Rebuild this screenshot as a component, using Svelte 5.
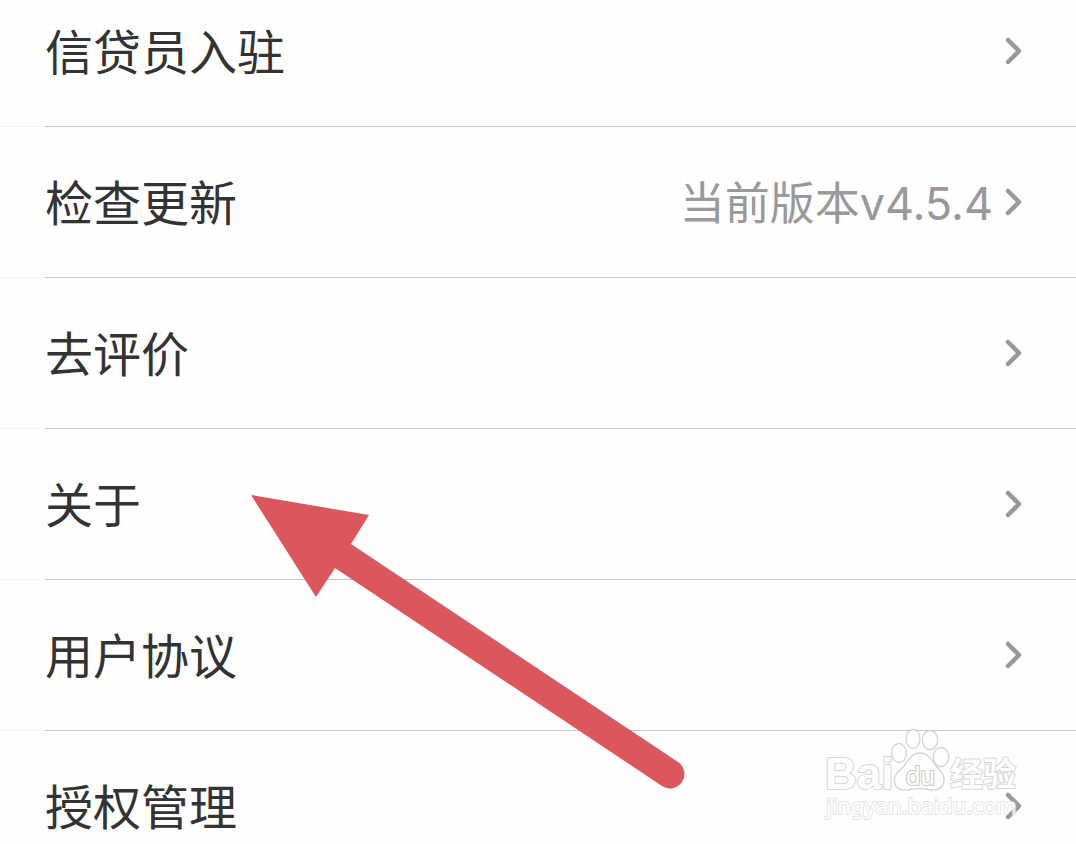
<!-- App.svelte - Settings list with pointer annotation -->
<script lang="ts">
  interface SettingItem {
    label: string;
    value?: string;
  }

  const items: SettingItem[] = [
    { label: '信贷员入驻' },
    { label: '检查更新', value: '当前版本v4.5.4' },
    { label: '去评价' },
    { label: '关于' },
    { label: '用户协议' },
    { label: '授权管理' },
  ];
</script>

<main class="screen">
  <ul class="list">
    {#each items as item}
      <li class="item">
        <button type="button" class="row">
          <span class="label">{item.label}</span>
          {#if item.value}
            <span class="value">{item.value}</span>
          {/if}
          <svg class="chevron" width="18" height="28" viewBox="0 0 18 28" aria-hidden="true">
            <path d="M3 3 L14 14 L3 25" />
          </svg>
        </button>
      </li>
    {/each}
  </ul>

  <!-- Pointer to the "about" row -->
  <svg class="arrow" width="436" height="296" viewBox="0 0 436 296" aria-hidden="true">
    <path d="M1 1 L119 21 L101 50 L428 268 A14 14 0 0 1 412 292 L85 74 L66 103 Z" />
  </svg>

  <!-- Watermark -->
  <svg class="watermark" width="200" height="96" viewBox="0 0 200 96" role="img" aria-label="Baidu 经验">
    <g class="mark">
      <ellipse cx="77" cy="27" rx="7.5" ry="9.5" />
      <ellipse cx="91" cy="13" rx="7" ry="9.5" />
      <ellipse cx="108" cy="14" rx="7.7" ry="9.5" />
      <ellipse cx="119" cy="31" rx="7.7" ry="9.5" />
      <path d="M98 27 C90 27 87 33 83 39 C78 45 72.500 47 72.500 54 C72.500 62 78 65 86 64 C94 62 101 62 108 64 C117 65 122 61 122 53 C122 47 117 44 113 39 C109 33 106 27 98 27 Z" />
    </g>
    <text class="brand" x="3" y="63">Bai</text>
    <text class="du" x="84" y="59">du</text>
    <text class="brand-cn" x="128" y="60">经验</text>
    <text class="site" x="4" y="88">jingyan.baidu.com</text>
  </svg>
</main>

<style>
  :global(body) { margin: 0; background: #fefefe; }

  .screen {
    position: relative; height: 100vh; overflow: hidden; background: #fefefe;
    font-family: Inter, "Noto Sans CJK SC", sans-serif;
  }

  /* The list is scrolled a little, so the first row is cut off at the top */
  .list { list-style: none; margin: -24px 0 0; padding: 0; }

  .row {
    display: flex; align-items: center; width: 100%; height: 150px;
    padding: 0 53px 0 45px; border: none; background: transparent;
    font-family: inherit; text-align: left; cursor: pointer;
  }

  .item::after {
    content: ''; display: block; height: 1px;
    background: linear-gradient(to right, #f5f5f5 45px, #c8c8c8 45px);
  }

  .label {
    flex: 1; padding-bottom: 4px; font-family: "Noto Sans CJK SC", sans-serif;
    font-size: 48px; line-height: 72px; color: #333333;
  }

  .value {
    padding-top: 4px; margin-right: 12px;
    font-size: 45px; line-height: 72px; color: #999999;
  }

  .chevron { flex: none; }
  .chevron path {
    fill: none; stroke: #999999; stroke-width: 4.5;
    stroke-linecap: round; stroke-linejoin: round;
  }

  .arrow { position: absolute; left: 250px; top: 494px; pointer-events: none; }
  .arrow path { fill: #db575d; }

  .watermark { position: absolute; right: 54px; bottom: 22px; pointer-events: none; }
  .mark { fill: #fefefe; stroke: #d4d4d4; stroke-width: 1.3; }

  .watermark text {
    fill: #fefefe; stroke: #d6d6d6; stroke-width: 2;
    paint-order: stroke; stroke-linejoin: round;
  }

  .brand { font-family: "Liberation Sans", sans-serif; font-size: 44px; font-weight: 700; }
  .watermark .du { font-family: "Liberation Sans", sans-serif; font-size: 26px; stroke: #c8c8c8; }
  .brand-cn { font-family: "Noto Sans CJK SC", sans-serif; font-size: 33px; font-weight: 700; }
  .watermark .site { font-family: "Noto Sans", sans-serif; font-size: 22px; stroke: #e0e0e0; opacity: 0.8; }
</style>
